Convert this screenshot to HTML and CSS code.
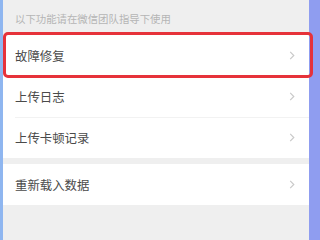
FILE: index.html
```html
<!DOCTYPE html>
<html lang="zh">
<head>
<meta charset="utf-8">
<link rel="stylesheet" href="styles.css">
</head>
<body>
<div class="screen">
  <div class="strip-left"></div>
  <main class="main">
    <div class="hint">以下功能请在微信团队指导下使用</div>
    <div class="group">
      <div class="row"><span>故障修复</span><svg class="chev" viewBox="0 0 6 10"><path d="M1 1 L5 5 L1 9"/></svg></div>
      <div class="row"><span>上传日志</span><svg class="chev" viewBox="0 0 6 10"><path d="M1 1 L5 5 L1 9"/></svg></div>
      <div class="row"><span>上传卡顿记录</span><svg class="chev" viewBox="0 0 6 10"><path d="M1 1 L5 5 L1 9"/></svg></div>
    </div>
    <div class="group">
      <div class="row"><span>重新载入数据</span><svg class="chev" viewBox="0 0 6 10"><path d="M1 1 L5 5 L1 9"/></svg></div>
    </div>
  </main>
  <div class="strip-right"></div>
  <div class="highlight"></div>
</div>
</body>
</html>
```
FILE: styles.css
```css
html, body {
  margin: 0;
  padding: 0;
}
body {
  width: 320px;
  height: 240px;
  overflow: hidden;
  background: #efefef;
  font-family: "Noto Sans CJK SC", "Noto Sans", sans-serif;
}
.screen {
  position: relative;
  display: flex;
  width: 320px;
  height: 240px;
}
.strip-left {
  width: 3px;
  background: #8fb6f0;
}
.strip-right {
  width: 11px;
  background: #8f9df0;
}
.main {
  flex: 1;
  display: flex;
  flex-direction: column;
  gap: 6px;
  background: #efefef;
}
.hint {
  height: 35px;
  box-sizing: border-box;
  padding: 12px 0 0 12px;
  margin-bottom: -6px;
  font-size: 10.4px;
  line-height: 14px;
  color: #b5b5b5;
  white-space: nowrap;
}
.group {
  background: #ffffff;
  display: flex;
  flex-direction: column;
}
.row {
  height: 41px;
  display: flex;
  align-items: center;
  justify-content: space-between;
  padding: 0 14px 0 12px;
  font-size: 12.4px;
  color: #4a4a4a;
  position: relative;
}
.row + .row::before {
  content: "";
  position: absolute;
  left: 12px;
  right: 0;
  top: 0;
  height: 1px;
  background: #f2f2f2;
}
.chev {
  width: 6px;
  height: 9px;
  fill: none;
  stroke: #c9c9c9;
  stroke-width: 1.3;
}
.highlight {
  position: absolute;
  left: 3px;
  top: 32px;
  width: 310px;
  height: 46px;
  box-sizing: border-box;
  border: 3px solid #e6323a;
  border-radius: 5px;
}
```
